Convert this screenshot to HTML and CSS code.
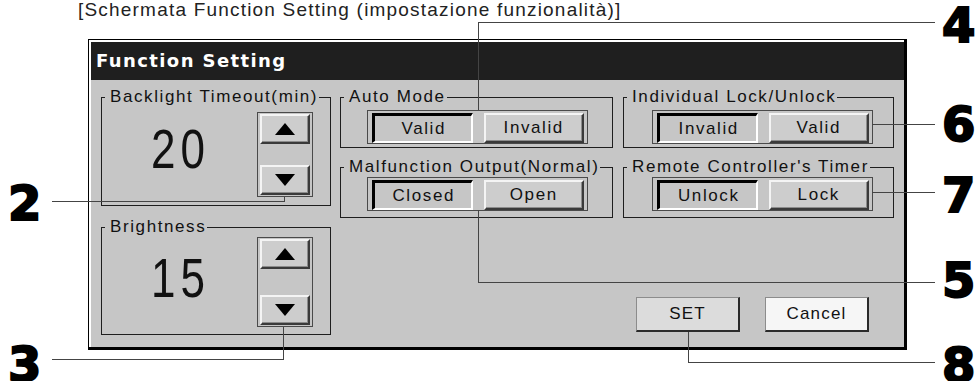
FILE: index.html
```html
<!DOCTYPE html>
<html lang="it">
<head>
<meta charset="utf-8">
<title>Function Setting</title>
<link rel="stylesheet" href="styles.css">
</head>
<body>
<p class="caption">[Schermata Function Setting (impostazione funzionalità)]</p>

<div class="window">
  <div class="titlebar">Function Setting</div>
  <div class="wbody">
    <div class="col-left">
      <fieldset class="grp">
        <legend>Backlight Timeout(min)</legend>
        <div class="spin-in spin-a">
          <div class="value">20</div>
          <div class="spinner spinner-a">
            <div class="btn arrow"><svg width="20" height="12" viewBox="0 0 20 12"><polygon points="10,0 20,12 0,12"/></svg></div>
            <div class="btn arrow"><svg width="20" height="12" viewBox="0 0 20 12"><polygon points="0,0 20,0 10,12"/></svg></div>
          </div>
        </div>
      </fieldset>
      <fieldset class="grp grp-b">
        <legend>Brightness</legend>
        <div class="spin-in spin-b">
          <div class="value">15</div>
          <div class="spinner spinner-b">
            <div class="btn arrow"><svg width="20" height="12" viewBox="0 0 20 12"><polygon points="10,0 20,12 0,12"/></svg></div>
            <div class="btn arrow"><svg width="20" height="12" viewBox="0 0 20 12"><polygon points="0,0 20,0 10,12"/></svg></div>
          </div>
        </div>
      </fieldset>
    </div>

    <div class="col-right">
      <div class="grid">
        <fieldset class="grp">
          <legend>Auto Mode</legend>
          <div class="opt-in opt-mid row1">
            <div class="frame">
              <div class="tb on">Valid</div>
              <div class="tb">Invalid</div>
            </div>
          </div>
        </fieldset>
        <fieldset class="grp">
          <legend>Individual Lock/Unlock</legend>
          <div class="opt-in opt-right row1">
            <div class="frame">
              <div class="tb on">Invalid</div>
              <div class="tb">Valid</div>
            </div>
          </div>
        </fieldset>
        <fieldset class="grp">
          <legend>Malfunction Output(Normal)</legend>
          <div class="opt-in opt-mid row2">
            <div class="frame">
              <div class="tb on">Closed</div>
              <div class="tb">Open</div>
            </div>
          </div>
        </fieldset>
        <fieldset class="grp">
          <legend>Remote Controller's Timer</legend>
          <div class="opt-in opt-right row2">
            <div class="frame">
              <div class="tb on">Unlock</div>
              <div class="tb">Lock</div>
            </div>
          </div>
        </fieldset>
      </div>
      <div class="actions">
        <div class="pb pb-set">SET</div>
        <div class="pb pb-cancel">Cancel</div>
      </div>
    </div>
  </div>
</div>

<div class="callout c4">4</div>
<div class="callout c6">6</div>
<div class="callout c7">7</div>
<div class="callout c5">5</div>
<div class="callout c8">8</div>
<div class="callout c2">2</div>
<div class="callout c3">3</div>

<div class="ln h l4h"></div>
<div class="ln v l4v"></div>
<div class="ln h l6h"></div>
<div class="ln h l7h"></div>
<div class="ln h l2h"></div>
<div class="ln v l2v"></div>
<div class="ln h l3h"></div>
<div class="ln v l3v"></div>
<div class="ln v l5v"></div>
<div class="ln h l5h"></div>
<div class="ln v l8v"></div>
<div class="ln h l8h"></div>
</body>
</html>
```

FILE: styles.css
```css
* { box-sizing: border-box; }

html, body {
  margin: 0;
  padding: 0;
}

body {
  width: 978px;
  height: 381px;
  background: #ffffff;
  position: relative;
  overflow: hidden;
  font-family: "Liberation Sans", Arial, sans-serif;
  color: #111;
}

.caption {
  margin: 0 0 0 78px;
  height: 20px;
  font-size: 19px;
  line-height: 20px;
  letter-spacing: 1.2px;
  color: #222;
  white-space: nowrap;
}

.window {
  margin: 19px 0 0 88px;
  width: 819px;
  height: 311px;
  border-style: solid;
  border-color: #000;
  border-width: 1px 3px 3px 1px;
  padding: 2px 0 0 2px;
  background: #c6c6c6;
  box-shadow: inset 2px 2px 0 #ffffff;
  display: flex;
  flex-direction: column;
}

.titlebar {
  height: 38px;
  background: #1f1f1f;
  color: #fff;
  font-family: "DejaVu Sans", sans-serif;
  font-weight: bold;
  font-size: 18px;
  line-height: 38px;
  letter-spacing: 1.4px;
  padding-left: 5px;
}

.wbody {
  display: flex;
  padding: 8px 0 0 10px;
}

.col-left {
  width: 230px;
  display: flex;
  flex-direction: column;
}

.col-right {
  width: 554px;
  margin-left: 9px;
  display: flex;
  flex-direction: column;
}

.grid {
  display: grid;
  grid-template-columns: 273px 271px;
  column-gap: 10px;
  row-gap: 10px;
}

.grp {
  margin: 0;
  padding: 0;
  min-width: 0;
  border: 1px solid #1e1e1e;
}

.grp legend {
  margin-left: 3px;
  padding: 0 1px 0 5px;
  font-size: 17px;
  line-height: 18px;
  letter-spacing: 1.6px;
  white-space: nowrap;
  color: #111;
}

.grp-b { margin-top: 12px; }

.spin-in {
  display: flex;
  align-items: flex-start;
  padding-left: 49px;
  padding-right: 17px;
}
.spin-a { padding-top: 6px; padding-bottom: 8px; }
.spin-b { padding-top: 1px; padding-bottom: 7px; }

.value {
  font-size: 44px;
  line-height: 44px;
  letter-spacing: 5px;
  margin-top: 15px;
  color: #111;
  transform: scaleY(1.25);
}
.spin-b .value { margin-top: 19px; }

.spinner {
  margin-left: auto;
  width: 56px;
  border: 1px solid #4a4a4a;
  padding: 1px 2px;
  display: flex;
  flex-direction: column;
  justify-content: space-between;
}
.spinner-a { height: 85px; }
.spinner-b { height: 90px; }

.btn {
  background: #cdcdcd;
  border-style: solid;
  border-width: 2px;
  border-color: #f4f4f4 #3a3a3a #3a3a3a #f4f4f4;
  box-shadow: inset -1px -1px 0 #8c8c8c;
}

.arrow {
  height: 30px;
  display: flex;
  align-items: center;
  justify-content: center;
}
.arrow svg { display: block; fill: #000; }

.opt-in { display: flex; }
.opt-mid { padding-left: 26px; }
.opt-right { padding-left: 28px; }
.row1 { padding-top: 4px; padding-bottom: 3px; }
.row2 { padding-top: 1px; padding-bottom: 6px; }

.frame {
  width: 221px;
  height: 34px;
  border: 1px solid #4a4a4a;
  padding: 2px 3px 0 4px;
  display: flex;
  gap: 11px;
}

.tb {
  width: 101px;
  height: 30px;
  background: #cdcdcd;
  border-style: solid;
  border-width: 2px;
  border-color: #f4f4f4 #3a3a3a #3a3a3a #f4f4f4;
  box-shadow: inset -1px -1px 0 #8c8c8c;
  font-size: 17px;
  line-height: 26px;
  letter-spacing: 1.6px;
  text-align: center;
  color: #111;
}

.tb.on {
  background: #c6c6c6;
  border-width: 3px 2px 2px 3px;
  border-color: #000 #ffffff #ffffff #000;
  box-shadow: none;
  line-height: 25px;
  padding-left: 2px;
}

.actions {
  display: flex;
  justify-content: flex-end;
  gap: 25px;
  margin-top: 79px;
  padding-right: 25px;
}

.pb {
  width: 104px;
  height: 35px;
  border-style: solid;
  border-width: 1px 2px 2px 1px;
  border-color: #8c8c8c #2a2a2a #2a2a2a #8c8c8c;
  font-size: 17px;
  line-height: 32px;
  letter-spacing: 1.2px;
  text-align: center;
  color: #111;
}
.pb-set { background: #dcdcdc; }
.pb-cancel { background: #f6f6f6; }

.callout {
  position: absolute;
  font-family: "DejaVu Sans", sans-serif;
  font-weight: bold;
  font-size: 48px;
  line-height: 48px;
  color: #000;
  -webkit-text-stroke: 2px #000;
}
.c4 { left: 942px; top: 1px; }
.c6 { left: 942px; top: 100px; }
.c7 { left: 942px; top: 171px; }
.c5 { left: 942px; top: 256px; }
.c8 { left: 942px; top: 341px; }
.c2 { left: 8px; top: 179px; }
.c3 { left: 8px; top: 340px; }

.ln {
  position: absolute;
  background: #444;
}
.ln.h { height: 1px; }
.ln.v { width: 1px; }

.l4h { left: 478px; top: 22px; width: 457px; }
.l4v { left: 478px; top: 22px; height: 88px; }
.l6h { left: 872px; top: 124px; width: 63px; }
.l7h { left: 872px; top: 192px; width: 63px; }
.l2h { left: 52px; top: 201px; width: 232px; }
.l2v { left: 284px; top: 197px; height: 5px; }
.l3h { left: 52px; top: 359px; width: 232px; }
.l3v { left: 283px; top: 327px; height: 33px; }
.l5v { left: 478px; top: 210px; height: 72px; }
.l5h { left: 478px; top: 282px; width: 457px; }
.l8v { left: 688px; top: 332px; height: 30px; }
.l8h { left: 688px; top: 362px; width: 247px; }
```
